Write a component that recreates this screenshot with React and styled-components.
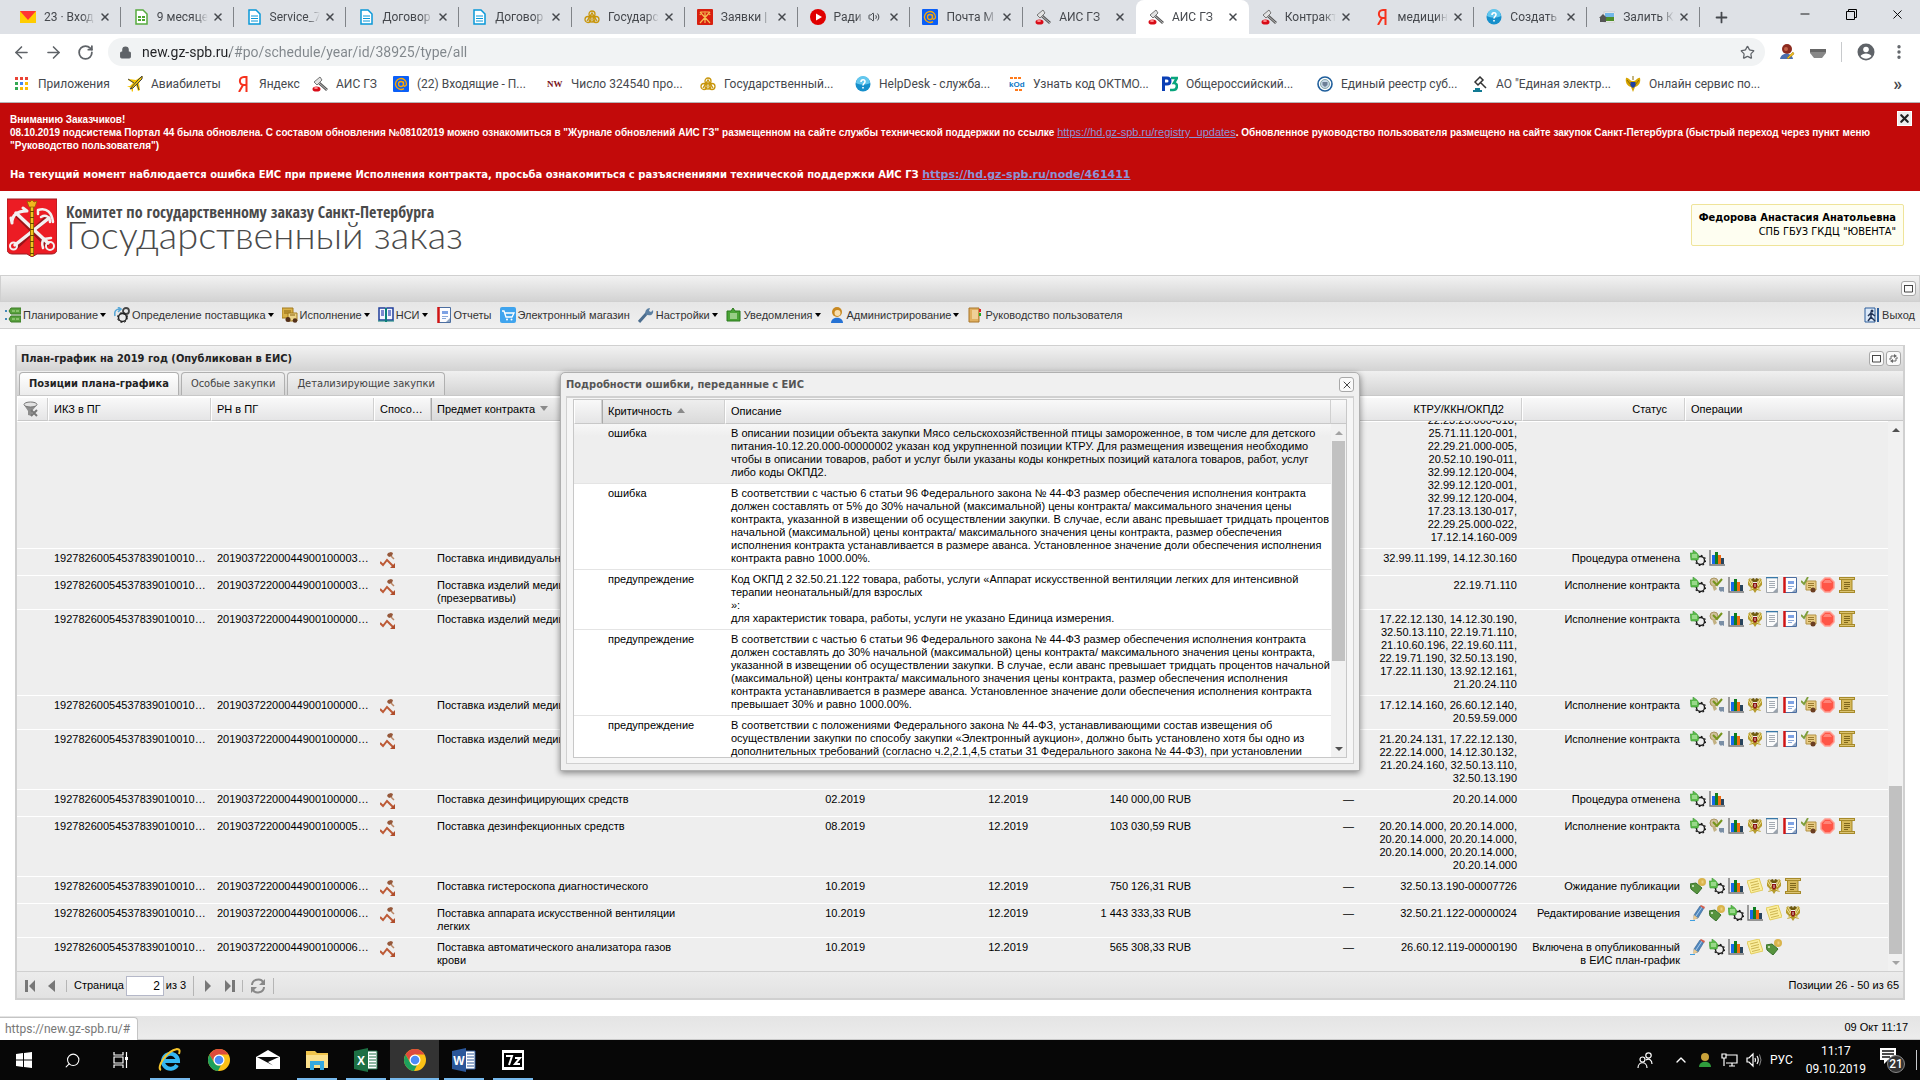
import styled, { createGlobalStyle, css } from "styled-components";
import {
  ArrowLeft,
  ArrowRight,
  RotateCw,
  Lock,
  Star,
  Volume2,
  Plus,
  X,
  Minus,
  EllipsisVertical,
  ChevronUp,
  Search,
} from "lucide-react";

const ui = `Roboto, "Open Sans", sans-serif`;
const arial = `"Liberation Sans", Arial, sans-serif`;
const tahoma = `"DejaVu Sans Condensed", "DejaVu Sans", sans-serif`;

const GlobalStyle = createGlobalStyle`
  * {
    box-sizing: border-box;
  }
  body {
    margin: 0;
    font-family: ${arial};
    font-size: 11px;
    line-height: 13px;
    color: #000;
  }
  button {
    margin: 0;
    padding: 0;
    border: 0;
    background: none;
    font: inherit;
    color: inherit;
    cursor: pointer;
  }
  svg {
    display: block;
    flex: none;
  }
`;

/* ---------- icons ---------- */

const Svg = ({ w = 16, h = 16, box, children }) => (
  <svg width={w} height={h} viewBox={box || `0 0 ${w} ${h}`} fill="none">
    {children}
  </svg>
);

const MailIcon = () => (
  <Svg>
    <rect y="2" width="16" height="12" fill="#fc0" />
    <path d="M0 2h16L8 11z" fill="#f33" />
  </Svg>
);
const SheetIcon = () => (
  <Svg>
    <path d="M3 1h7l4 4v10H3z" fill="#fff" stroke="#57ab3f" strokeWidth="1.5" />
    <path d="M5 7h3v2H5zM9 7h3v2H9zM5 10h3v2H5zM9 10h3v2H9z" fill="#4da62f" />
  </Svg>
);
const DocIcon = () => (
  <Svg>
    <path d="M3 1h7l4 4v10H3z" fill="#fff" stroke="#0a98d8" strokeWidth="1.5" />
    <path d="M5 7h7M5 9.500h7M5 12h7" stroke="#0a98d8" />
  </Svg>
);
const RingsIcon = () => (
  <Svg>
    <g stroke="#c8960c" strokeWidth="1.300">
      <circle cx="8" cy="5" r="3" />
      <circle cx="4" cy="10.500" r="3" />
      <circle cx="12" cy="10.500" r="3" />
      <circle cx="8" cy="10" r="3" />
      <path d="M3 12l5-8 5 8" />
    </g>
  </Svg>
);
const ArmsSmall = () => (
  <Svg>
    <rect width="16" height="16" rx="1" fill="#d8200f" />
    <path d="M3 3l10 11M13 3L3 14M8 2v12M3 6l1-3 3 0M13 6l-1-3-3 0" stroke="#f6c052" strokeWidth="1.200" />
  </Svg>
);
const PlayIcon = () => (
  <Svg>
    <circle cx="8" cy="8" r="8" fill="#e00000" />
    <path d="M6 4.500v7L12 8z" fill="#fff" />
  </Svg>
);
const AtIcon = () => (
  <Svg>
    <rect width="16" height="16" rx="1" fill="#0b5ff7" />
    <g stroke="#ffa800" strokeWidth="1.300">
      <circle cx="8" cy="8" r="2.500" />
      <path d="M10.500 5.500V9c0 2 3 1.500 3-1a5.500 5.500 0 1 0-2.500 4.600" />
    </g>
  </Svg>
);
const GavelFav = () => (
  <Svg>
    <path d="M6 6l9 8" stroke="#555" strokeWidth="2.800" />
    <path d="M7 7l8 7" stroke="#bbb" />
    <path d="M2 6l6-5 2 3-5 5z" fill="#e2e2e2" stroke="#777" />
    <ellipse cx="4.500" cy="13" rx="4" ry="2.600" fill="#d80c18" />
    <ellipse cx="4" cy="12" rx="2" ry="1" fill="#ff8c8c" />
  </Svg>
);
const YandexIcon = () => (
  <Svg>
    <path d="M11.500 0v16M11.500 1H9C3.500 1 3.500 9 9 9h2.500M8 9l-4 7" stroke="#f6311c" strokeWidth="2" />
  </Svg>
);
const HelpIcon = () => (
  <Svg>
    <circle cx="8" cy="8" r="7.500" fill="#168fcb" />
    <path d="M1 7a7 7 0 0 1 14 0c-4 2-10 2-14 0z" fill="#63c7ee" />
    <path d="M6 6c0-3 4-3 4-.5C10 7.500 8 7.500 8 9.500M8 11v1.500" stroke="#fff" strokeWidth="1.600" />
  </Svg>
);
const PhotoHouse = () => (
  <Svg>
    <rect x="5" y="3" width="11" height="10" fill="#fff" stroke="#ccc" />
    <rect x="6" y="4" width="9" height="4" fill="#72b7e8" />
    <rect x="6" y="8" width="9" height="4" fill="#4f8f2a" />
    <path d="M0 9l4-4 4 4H7v4H1V9z" fill="#555" />
  </Svg>
);
const AppsIcon = () => (
  <Svg>
    {["#ea4335", "#ea4335", "#ea4335", "#34a853", "#4285f4", "#fbbc05", "#34a853", "#fbbc05", "#fbbc05"].map((c, i) => (
      <rect key={i} x={1 + (i % 3) * 5} y={1 + Math.floor(i / 3) * 5} width="3" height="3" fill={c} />
    ))}
  </Svg>
);
const PlaneIcon = () => (
  <Svg>
    <path d="M15 0L9 4 2 3 1 4l5 3-3 3H0l4 2 1 4 1-1v-3l3-3 2 6 2-1-1-7 4-6z" fill="#f5c400" />
    <path d="M15 0l-5 5-7 8 3-1 9-9zM1 3l6 4M12 14l-2-6" stroke="#444" />
  </Svg>
);
const NwIcon = () => (
  <Svg>
    <text x="0" y="11" fontFamily="Liberation Serif" fontSize="9" fontWeight="bold" fill="#7a1420">
      NW
    </text>
  </Svg>
);
const KodIcon = () => (
  <Svg>
    <path d="M1 1h3v2H1zM5 1h3v2H5zM9 1h3v2H9zM6 13h3v2H6zM10 13h3v2h-3z" fill="#ff7a1a" />
    <text x="0" y="11" fontFamily="Liberation Sans" fontSize="8" fontWeight="bold" fill="#0a78c8">
      kOd
    </text>
  </Svg>
);
const P3Icon = () => (
  <Svg>
    <path d="M1.500 15V2H5c4 0 4 6 0 6H2" stroke="#0a3fb5" strokeWidth="3" />
    <path d="M9 2h6l-3 5c4 0 4 7-1 7H8" stroke="#09a57c" strokeWidth="2.600" />
  </Svg>
);
const SealIcon = () => (
  <Svg>
    <circle cx="8" cy="8" r="7" fill="#fff" stroke="#1f5e9b" strokeWidth="1.600" />
    <circle cx="8" cy="8" r="4.500" fill="#c7d7e6" stroke="#8aa" />
    <path d="M5.500 6h5v3L8 11 5.500 9z" fill="#6c7f95" />
  </Svg>
);
const GavelLine = () => (
  <Svg>
    <path d="M3 6l5-5 3 3-5 5zM8 6l6 6" stroke="#333" strokeWidth="1.500" />
    <path d="M3 13h5M1 15h9" stroke="#127a93" strokeWidth="1.800" />
  </Svg>
);
const Eagle = () => (
  <Svg>
    <path d="M6 7L5 3 3 1 1 3l0 5 3 3-2 3 4-1 2 3 2-3 4 1-2-3 3-3V3l-2-2-2 2-1 4z" fill="#b59a2c" />
    <path d="M1 3l4 6M3 2l3 6M15 3l-4 6M13 2l-3 6M3 13l3-2M13 13l-3-2" stroke="#efe39a" />
    <path d="M4 2l3-1 1 2 1-2 3 1-2 3H6z" fill="#6f5a10" />
    <path d="M6 6h4v4l-2 2-2-2z" fill="#8c1216" />
    <path d="M8 7v3" stroke="#e8dcd0" />
  </Svg>
);
const EagleBlue = () => (
  <Svg>
    <path d="M7 5C5 5 3 1 1 2c-1 4 1 8 5 9l2 5 2-5c4-1 6-5 5-9-2-1-4 3-6 3z" fill="#d6a400" />
    <path d="M2 4l4 5M14 4l-4 5M8 0v4" stroke="#8b6a00" />
    <path d="M5.500 6h5v4L8 12 5.500 10z" fill="#1d3fa4" />
  </Svg>
);
const PersonExt = () => (
  <Svg>
    <circle cx="8" cy="5" r="5" fill="#8d2b1f" />
    <circle cx="7" cy="5" r="2" fill="#c5634a" />
    <path d="M1 15c1-7 12-7 13 0z" fill="#4a6fb0" />
    <path d="M8 14l6-6 1 2-6 5z" fill="#f0c020" stroke="#a07000" strokeWidth=".5" />
  </Svg>
);
const ShieldExt = () => (
  <Svg>
    <path d="M0 5h16v4l-4 5H4L0 9z" fill="#888" />
    <path d="M0 5h16v3H0z" fill="#666" />
  </Svg>
);
const AccountIcon = () => (
  <Svg w={18} h={18}>
    <circle cx="9" cy="9" r="8.500" fill="#5f6368" />
    <circle cx="9" cy="6.500" r="2.800" fill="#fff" />
    <path d="M3.500 13c2-3.500 9-3.500 11 0-3 3.500-8 3.500-11 0z" fill="#fff" />
  </Svg>
);

const CityArms = () => (
  <Svg w={50} h={59}>
    <path d="M0 1h50v50c0 4-3 5-6 5H30l-5 3-5-3H6c-3 0-6-1-6-5z" fill="#ec1c24" stroke="#9c1a20" />
    <g stroke="#4a0a0c" strokeWidth="5" opacity=".5">
      <path d="M9 16l32 32M42 18L9 49" />
    </g>
    <g stroke="#f3f1f1" strokeLinecap="round">
      <path d="M9 15l32 30M42 20L8 47" strokeWidth="3.500" />
      <path d="M5 25c0-7 4-12 15-12M5 25l-1-5M20 13l-4-3" strokeWidth="3" />
      <path d="M31 12c9-3 14 3 15 12M34 19c5-3 9 0 9 5M31 12l0 4" strokeWidth="2.500" />
      <path d="M37 41c-3 3-2 6-1 9M37 41l7-1" strokeWidth="2.500" />
    </g>
    <circle cx="6.500" cy="48" r="3.500" stroke="#f3f1f1" strokeWidth="2" />
    <circle cx="43" cy="48" r="4" stroke="#f3f1f1" strokeWidth="2" />
    <path d="M25 8v50" stroke="#6a4a00" strokeWidth="4" />
    <path d="M25 8v50" stroke="#f2c41e" strokeWidth="2.600" strokeDasharray="5 1" />
    <path d="M20 3l3 1 2-2 2 2 3-1-2 6h-6z" fill="#f2b71e" stroke="#8c5d00" strokeWidth=".7" />
  </Svg>
);

const PlanIcon = () => (
  <Svg>
    <path d="M0 4h2M0 12h2" stroke="#4488b8" strokeWidth="2" />
    <path d="M6 1h10v6H6L4 4zM6 9h10v6H6l-2-3z" fill="#57a03c" stroke="#3e7d28" />
    <path d="M7 4h8M7 12h8" stroke="#b9e29a" strokeDasharray="3 1" />
  </Svg>
);
const Gears = () => (
  <Svg>
    <circle cx="12" cy="4" r="3" stroke="#444" strokeWidth="1.800" />
    <circle cx="8.500" cy="10.500" r="4" stroke="#222" strokeWidth="1.500" />
    <circle cx="8.500" cy="10.500" r="5" stroke="#222" strokeDasharray="2 2" />
    <path d="M1 9C0 4 2 2 6 2M4 0l3 2-3 3" stroke="#59a7d6" strokeWidth="1.600" />
  </Svg>
);
const ExecIcon = () => (
  <Svg>
    <path d="M0 1h11v10H0z" fill="#d9b148" stroke="#a37a1c" />
    <path d="M2 4h7M2 6h7" stroke="#8b6511" />
    <path d="M6 6h9v8H6z" fill="#ecd489" stroke="#a37a1c" />
    <path d="M8 8h5" stroke="#8b6511" />
    <circle cx="6" cy="12.500" r="2.500" fill="#53301a" />
    <circle cx="13" cy="13.500" r="2.300" fill="#53301a" />
  </Svg>
);
const BookIcon = () => (
  <Svg>
    <path d="M1 1h6l1 1 1-1h6v12H9l-1 1-1-1H1z" fill="#f4f6ff" stroke="#1f3e9a" strokeWidth="1.500" />
    <path d="M8 1v14" stroke="#0a8078" strokeWidth="2" />
    <path d="M3 4h3M3 6h3M3 8h3M10 4h3M10 6h3M10 8h3" stroke="#5364c0" strokeWidth="1.500" />
    <path d="M0 14h16" stroke="#0a8078" />
  </Svg>
);
const ReportIcon = () => (
  <Svg>
    <path d="M2.500 .5h12v15h-12z" fill="#fdfdff" stroke="#4c6ea0" />
    <path d="M1 1h3M1 3h3M1 5h3M1 7h3M1 9h3M1 11h3M1 13h3M1 15h3" stroke="#d01414" />
    <path d="M2.500 0v16" stroke="#d01414" strokeWidth="2" />
    <path d="M6 4h6v3H6z" fill="#7ea2e4" />
    <path d="M6 9.500h6M6 11.500h4" stroke="#8aa8d8" />
    <path d="M10 15l4-4v4z" fill="#8ea4c2" />
  </Svg>
);
const CartIcon = () => (
  <Svg>
    <rect width="16" height="16" rx="2" fill="#3fa4ee" />
    <path d="M2 4h2l2 6h6l2-4H5" stroke="#fff" strokeWidth="1.300" />
    <circle cx="7" cy="12.500" r="1" fill="#fff" />
    <circle cx="11.500" cy="12.500" r="1" fill="#fff" />
  </Svg>
);
const WrenchIcon = () => (
  <Svg>
    <path d="M1 15l8-9" stroke="#4c6e8f" strokeWidth="3" />
    <path d="M8 8C6 4 9 1 12 1l-1 3 2 1 2-2c1 4-2 6-5 5z" fill="#5c80a2" />
  </Svg>
);
const NoticeIcon = () => (
  <Svg>
    <path d="M1 4h4l2-3 2 3h5v10H1z" fill="#4aa336" stroke="#2b7a1c" />
    <path d="M4 7h7M4 9h7M4 11h7" stroke="#e6f8d8" />
  </Svg>
);
const AdminIcon = () => (
  <Svg>
    <circle cx="8" cy="5" r="5" fill="#c88820" />
    <circle cx="8.500" cy="6" r="3" fill="#f8dfb0" />
    <path d="M2 16c0-7 12-7 12 0z" fill="#2672d4" />
  </Svg>
);
const GuideIcon = () => (
  <Svg>
    <path d="M2 1h10v14H2z" fill="#e0b060" stroke="#a87428" />
    <path d="M5 3h6v9H5z" fill="#efcf96" />
    <path d="M13 2v3" stroke="#d22" strokeWidth="2" />
    <path d="M13 6v3" stroke="#2a2" strokeWidth="2" />
  </Svg>
);
const ExitIcon = () => (
  <Svg>
    <path d="M1 1h10v14H1z" fill="#dce9f8" stroke="#2a5c9a" />
    <path d="M14 1v14" stroke="#2a5c9a" strokeWidth="2" />
    <circle cx="8" cy="4" r="1.500" fill="#235" />
    <path d="M4 14l3-4V6l4 3M7 10l4 4M7 6L4 9" stroke="#235" strokeWidth="1.500" />
  </Svg>
);
const FunnelIcon = () => (
  <Svg>
    <path d="M1 4l4 6v4l4 1v-5l5-6z" fill="#8d8d8d" />
    <ellipse cx="7.500" cy="3.500" rx="6.500" ry="2.500" fill="#e2e2e2" stroke="#777" />
    <path d="M8 9l6 6M14 9l-6 6" stroke="#777" strokeWidth="2" />
  </Svg>
);
const AuctionIcon = () => (
  <Svg>
    <path d="M8 1l3-1 2 1-1 3-3 1-2-2z" fill="#96583a" />
    <path d="M11 4l3 3" stroke="#b98565" strokeWidth="1.500" />
    <path d="M0 10l3 3 4-5 6 6" stroke="#bd5a36" strokeWidth="2" />
    <path d="M15 11v5h-5z" fill="#b04e2c" />
  </Svg>
);

const GearNote = () => (
  <Svg>
    <circle cx="10.500" cy="10.500" r="4" stroke="#1c1c1c" strokeWidth="1.400" />
    <circle cx="10.500" cy="10.500" r="5" stroke="#1c1c1c" strokeDasharray="1.600 2.300" strokeWidth="1.400" />
    <path d="M3 3V0l4 3 2 3-1 4H1L0 3z" fill="#5cbb4c" stroke="#3f9a35" strokeWidth=".6" />
    <path d="M2 5h5M2 7h5" stroke="#d6f5c8" />
  </Svg>
);
const CheckKey = () => (
  <Svg>
    <circle cx="5" cy="5" r="4" fill="#cfc09a" stroke="#aa9560" />
    <path d="M3 8l2 6 3-2-2-4z" fill="#c3b283" />
    <path d="M4 4l4 4 5-6" stroke="#76951c" strokeWidth="2" />
    <path d="M10 10h5v5l-2-1-1 1-2-2z" fill="#7a8fa6" />
  </Svg>
);
const ChartIcon = () => (
  <Svg>
    <path d="M1 0v15h15" stroke="#777" strokeWidth="1.400" />
    <path d="M3 5h3v9H3z" fill="#1768e8" />
    <path d="M6 2h3v12H6z" fill="#0f7d1f" />
    <path d="M9 5h3v9H9z" fill="#f26a10" />
    <path d="M12 8h3v6h-3z" fill="#27435c" />
  </Svg>
);
const PaperIcon = () => (
  <Svg w={13} box="0 0 13 16">
    <path d="M.5 .5h11v15H.5z" fill="#fbfbfb" stroke="#a0a6ad" />
    <path d="M0 .5h12" stroke="#3878a8" strokeWidth="1.600" />
    <path d="M3 4.500h6M3 6.500h6M3 8.500h6M3 10.500h6" stroke="#a4abb3" />
    <path d="M7 15l4-4v4z" fill="#98a2ad" />
  </Svg>
);
const SignIcon = () => (
  <Svg>
    <path d="M5 4h10v9H5z" fill="#e8cc84" stroke="#b39142" />
    <path d="M7 6.500h6M7 8.500h6M7 10.500h3" stroke="#9a7a30" />
    <path d="M0 4l3 3 4-7" stroke="#7e9e3c" strokeWidth="1.800" />
    <circle cx="12" cy="13" r="2.500" fill="#6b3e22" />
  </Svg>
);
const StopIcon = () => (
  <Svg>
    <path d="M5 1h5l4 4v6l-4 4H5l-4-4V5z" fill="#ff5547" stroke="#ff9d92" strokeWidth="1.500" />
    <path d="M5 3h5l2 3H3z" fill="#ff8478" />
  </Svg>
);
const ScrollIcon = () => (
  <Svg>
    <path d="M2 2h11v12H3z" fill="#d5b859" />
    <path d="M2.500 2v12M13 2v12" stroke="#a68a2a" />
    <path d="M0 0h16v3H0zM0 13h16v3H0z" fill="#a68a2a" />
    <path d="M1 1.500h14M1 14.500h14" stroke="#dcc474" />
    <path d="M5 5.500h6M5 7.500h6M5 9.500h6M5 11.500h4" stroke="#7f671c" />
  </Svg>
);
const TagIcon = () => (
  <Svg>
    <circle cx="12" cy="4" r="4" fill="#d9b44c" />
    <path d="M12.500 2.500v3" stroke="#ecd07c" strokeWidth="2" />
    <path d="M0 6l6-1 6 5-5 6-6-5z" fill="#57943e" stroke="#37702a" />
    <circle cx="3" cy="8" r="1" fill="#dff0d4" />
  </Svg>
);
const NoteIcon = () => (
  <Svg>
    <path d="M0 3l12-3 4 12-12 3z" fill="#fbee9c" stroke="#e2cd5e" />
    <path d="M3 5l8-2M4 7.500l8-2M4 10l8-2M5 12.500l8-2" stroke="#cdb552" />
  </Svg>
);
const PencilIcon = () => (
  <Svg>
    <path d="M4 10l6-9 4 2-6 10-4 1z" fill="#4f86bd" stroke="#35618d" strokeWidth=".6" />
    <path d="M6 11l6-9" stroke="#a9cdee" />
    <path d="M10 1l1-1 4 2-1 2z" fill="#d4604f" />
    <path d="M4 10l4 3-5 2z" fill="#ecc98c" />
    <path d="M0 15.500h5" stroke="#3f9fe0" />
  </Svg>
);

const opIcons = {
  gear: GearNote,
  check: CheckKey,
  chart: ChartIcon,
  eagle: Eagle,
  paper: PaperIcon,
  report: ReportIcon,
  sign: SignIcon,
  stop: StopIcon,
  scroll: ScrollIcon,
  tag: TagIcon,
  note: NoteIcon,
  pencil: PencilIcon,
};

/* taskbar */
const WinIcon = () => (
  <Svg>
    <path d="M0 2l7-1v6.500H0zM8 1l8-1v7.500H8zM0 8.500h7V15l-7-1zM8 8.500h8V16l-8-1z" fill="#fff" />
  </Svg>
);
const TaskView = () => (
  <Svg>
    <path d="M1 0v3h9V0M1 16v-3h9v3M1 5h9v6H1zM13.500 0v16" stroke="#fff" strokeWidth="1.200" />
    <rect x="12" y="5" width="3" height="3" fill="#fff" />
  </Svg>
);
const IeIcon = () => (
  <Svg w={24} h={24}>
    <path d="M19 17a7.500 7.500 0 1 1 1-4H6" stroke="#35b7f1" strokeWidth="4" />
    <path d="M3 22C-2 20 8 3 19 1c3 0 3 2 2 5" stroke="#f5c52c" strokeWidth="2" />
  </Svg>
);
const ChromeIcon = () => (
  <Svg w={24} h={24}>
    <circle cx="12" cy="12" r="11" fill="#fbc116" />
    <path d="M2.500 6.500A11 11 0 0 1 21.500 6.500H12A5.500 5.500 0 0 0 7 14z" fill="#de4b3c" />
    <path d="M2.500 6.500L7.200 14.700A5.500 5.500 0 0 0 14 17l-3 6A11 11 0 0 1 2.500 6.500z" fill="#1da05d" />
    <circle cx="12" cy="12" r="5.500" fill="#fff" />
    <circle cx="12" cy="12" r="4.300" fill="#4c8bf5" />
  </Svg>
);
const MailApp = () => (
  <Svg w={24} h={24}>
    <path d="M0 9l12-7 12 7v12H0z" fill="#fff" />
    <path d="M1 9h22l-11 5 5 3.500L1 9z" fill="#0a0a0a" />
  </Svg>
);
const FolderApp = () => (
  <Svg w={24} h={24}>
    <path d="M1 3h9l2 2h11v15H1z" fill="#f0c44c" />
    <path d="M1 7h22v13H1z" fill="#fbe08c" />
    <path d="M5 22v-9h14v9h-4v-5h-6v5z" fill="#35a9e0" />
  </Svg>
);
const OfficeApp = ({ color, letter }) => (
  <Svg w={24} h={24}>
    <path d="M13 3h10v18H13z" fill="#fff" stroke={color} />
    <path d="M15 6h7M15 9h7M15 12h7M15 15h7M15 18h7" stroke={color} />
    <path d="M0 3l14-3v24L0 21z" fill={color} />
    <text x="7" y="17" textAnchor="middle" fontFamily="Liberation Sans" fontSize="12" fontWeight="bold" fill="#fff">
      {letter}
    </text>
  </Svg>
);
const ZipApp = () => (
  <Svg w={24} h={24}>
    <rect x="1" y="2" width="22" height="20" fill="#fff" />
    <rect x="3" y="5" width="18" height="14" fill="#000" />
    <path d="M5 8h6l-3 9M14 10h5l-5 6h5" stroke="#fff" strokeWidth="2" />
  </Svg>
);
const PeopleTray = () => (
  <Svg>
    <g stroke="#fff" strokeWidth="1.200">
      <circle cx="5.500" cy="7.500" r="2.500" />
      <path d="M1 16c0-7 9-7 9 0" />
      <circle cx="11.500" cy="3.500" r="2.700" />
      <path d="M9 8c3-2 6 0 6 4" />
    </g>
  </Svg>
);
const UserTray = () => (
  <Svg>
    <circle cx="8" cy="5" r="4" fill="#c9a23a" />
    <path d="M2 15c0-7 12-7 12 0z" fill="#2f9c3c" />
  </Svg>
);
const NetTray = () => (
  <Svg w={17} h={16}>
    <path d="M5 3h11v8H5M8 14h6M11 11v3M1 2h4v4H1zM3 6v8" stroke="#fff" strokeWidth="1.200" />
  </Svg>
);
const VolTray = () => (
  <Svg>
    <path d="M1 6h2l4-4v12l-4-4H1zM9 6q1 2 0 4M11 4q2.500 4 0 8" stroke="#fff" strokeWidth="1.200" />
    <path d="M13.500 2.500q3 5.500 0 11" stroke="#888" />
  </Svg>
);
const ActionCenter = () => (
  <Svg w={28} h={28}>
    <path d="M2 2h16v12H10l-4 4v-4H2z" fill="#fff" />
    <path d="M4 5h12M4 8h12M4 11h8" stroke="#111" strokeWidth="1.300" />
    <circle cx="18" cy="18" r="8.500" fill="#333" stroke="#888" />
    <text x="18" y="22" textAnchor="middle" fontFamily="Roboto" fontSize="12" fontWeight="500" fill="#fff">
      21
    </text>
  </Svg>
);

/* ---------- browser chrome ---------- */

const Screen = styled.div`
  display: flex;
  flex-direction: column;
  height: 100vh;
  min-height: 800px;
  min-width: 1500px;
  background: #fff;
`;

const TabStrip = styled.div`
  display: flex;
  height: 34px;
  padding-left: 8px;
  background: #dee1e6;
  font: 12px/16px ${ui};
  color: #45484d;
`;

const TabList = styled.div`
  display: flex;
  flex: 1;
  min-width: 0;
`;

const BrowserTab = styled.div`
  flex: 1 1 0;
  min-width: 0;
  display: flex;
  align-items: center;
  gap: 8px;
  padding: 0 10px 0 12px;
  background: linear-gradient(#808388, #808388) right 7px / 1px 20px no-repeat;
  ${(props) => props.$plain && "background: none;"}
  ${(props) =>
    props.$active &&
    css`
      background: #fff;
      border-radius: 8px 8px 0 0;
    `}
`;

const TabName = styled.span`
  flex: 1;
  min-width: 0;
  margin-right: -4px;
  overflow: hidden;
  white-space: nowrap;
  mask-image: linear-gradient(90deg, #000 75%, transparent);
`;

const NewTab = styled.button`
  display: grid;
  place-items: center;
  width: 42px;
  margin-right: 40px;
`;

const WindowButton = styled.button`
  display: grid;
  place-items: center;
  width: 46px;
  height: 28px;
  color: #000;
`;

const AddressRow = styled.div`
  display: flex;
  align-items: center;
  height: 36px;
  padding: 0 12px 0 5px;
  color: #5f6368;
`;

const NavButton = styled.button`
  display: grid;
  place-items: center;
  width: 32px;
`;

const Omnibox = styled.label`
  flex: 1;
  display: flex;
  align-items: center;
  gap: 10px;
  height: 28px;
  margin-left: 7px;
  padding: 0 10px 0 11px;
  border-radius: 14px;
  background: #f1f3f4;
`;

const UrlInput = styled.input`
  flex: 1;
  border: 0;
  padding: 0;
  outline: 0;
  font: 14px/20px ${ui};
  color: transparent;
  background: linear-gradient(90deg, #202124 88px, #80868b 88px);
  background-clip: text;
`;

const Extensions = styled.div`
  display: flex;
  align-items: center;
  gap: 15px;
  padding-left: 14px;
`;

const Divider = styled.span`
  width: 1px;
  height: 20px;
  background: #c8cacd;
`;

const Bookmarks = styled.nav`
  display: flex;
  align-items: center;
  height: 33px;
  padding: 0 18px 4px 14px;
  border-bottom: 1px solid #b6b4b6;
  font: 12px/16px ${ui};
  color: #45484d;
`;

const Bookmark = styled.a`
  display: flex;
  align-items: center;
  gap: 8px;
  width: ${(props) => props.$w}px;
  flex: none;
  overflow: hidden;
  white-space: nowrap;
  color: inherit;
  text-decoration: none;
`;

const More = styled.button`
  margin-left: auto;
  font-size: 18px;
  font-weight: 600;
`;

/* ---------- page ---------- */

const Page = styled.main`
  position: relative;
  flex: 1;
  min-height: 0;
  display: flex;
  flex-direction: column;
`;

const Banner = styled.section`
  display: flex;
  justify-content: space-between;
  height: 88px;
  padding: 8px 8px 0 10px;
  background: #c20a0a;
  color: #fff;
  font-weight: bold;
`;

const BannerText = styled.div`
  padding-top: 2px;
  font-size: 10px;

  p {
    margin: 0;
  }
  p + p {
    margin-top: 16px;
    font-family: "DejaVu Sans", sans-serif;
  }
  a {
    color: #8c93d6;
    font-size: 11px;
  }
  p:first-child a {
    font-weight: normal;
  }
`;

const BannerClose = styled.button`
  flex: none;
  display: grid;
  place-items: center;
  width: 15px;
  height: 15px;
  border: 1px solid #fff;
  background: #eee;
  color: #222;
`;

const SiteHeader = styled.header`
  display: flex;
  justify-content: space-between;
  height: 84px;
  padding: 7px 16px 0 7px;
`;

const Brand = styled.div`
  display: flex;
  gap: 9px;
  color: #4a4a4a;
`;

const BrandText = styled.div`
  padding-top: 4px;
`;

const Committee = styled.div`
  font: 16px/20px "Liberation Sans Narrow", "Open Sans Condensed", sans-serif;
  white-space: nowrap;
`;

const SiteName = styled.div`
  font: 300 38px/24px "Lato", "Open Sans", sans-serif;
  white-space: nowrap;
`;

const UserBox = styled.div`
  height: 42px;
  margin-top: 6px;
  padding: 6px 7px;
  border: 1px solid #efe49a;
  border-radius: 2px;
  background: #fefef1;
  font: 11px/14px ${tahoma};
  text-align: right;
`;

const bar = css`
  background: linear-gradient(#f2f2f2, #d3d3d3);
`;

const GreyBar = styled.div`
  display: flex;
  align-items: center;
  justify-content: flex-end;
  height: 27px;
  padding: 0 3px;
  border: 1px solid #d0d0d0;
  ${bar}
`;

const ToolButton = styled.button`
  display: grid;
  place-items: center;
  width: 15px;
  height: 15px;
  border: 1px solid #a8a8a8;
  border-radius: 3px;
  background: #fafafa;
  color: #444;
`;

const MenuBar = styled.nav`
  display: flex;
  align-items: center;
  gap: 8px;
  height: 27px;
  padding: 0 5px;
  border-bottom: 1px solid #d0d0d0;
  background: linear-gradient(#e6e6e6, #f0f0f0);
`;

const MenuButton = styled.button`
  display: flex;
  align-items: center;
  gap: 2px;
  white-space: nowrap;
  color: #333;

  &:last-child {
    margin-left: auto;
  }
`;

const Caret = styled.span`
  border: 3px solid transparent;
  border-top: 4px solid #000;
  border-bottom: 0;
`;

const Panel = styled.section`
  flex: 1;
  min-height: 0;
  display: flex;
  flex-direction: column;
  margin: 16px 15px;
  border: 2px solid #d0d0d0;
  border-top-width: 1px;
`;

const PanelTitle = styled.div`
  display: flex;
  align-items: center;
  gap: 2px;
  height: 25px;
  padding: 0 2px 0 4px;
  ${bar}

  h1 {
    flex: 1;
    margin: 0;
    font: bold 11px/16px ${tahoma};
    color: #222;
  }
`;

const PanelTabs = styled.div`
  display: flex;
  gap: 2px;
  height: 25px;
  padding: 1px 2px 0;
  border-bottom: 1px solid #c8c8c8;
  background: linear-gradient(#f0f0f0, #d3d3d3);
`;

const PanelTab = styled.button`
  padding: 0 9px;
  border: 1px solid #b0b0b0;
  border-bottom: 0;
  border-radius: 4px 4px 0 0;
  background: linear-gradient(#f0f0f0, #dcdcdc);
  font: 11px/20px ${tahoma};
  color: #444;
  ${(props) =>
    props.$active &&
    css`
      background: linear-gradient(#fff, #ececec);
      font-weight: bold;
      color: #222;
    `}
`;

const GridArea = styled.div`
  flex: 1;
  min-height: 0;
  display: flex;
  margin-top: 2px;
  background: #eee;
  border-bottom: 1px solid #d0d0d0;
`;

const Grid = styled.table`
  flex: 1;
  width: 0;
  table-layout: fixed;
  border-spacing: 0;
  align-self: flex-start;
`;

const Th = styled.th`
  height: ${(props) => props.$h || 23}px;
  padding: 0 6px 0 5px;
  border-left: 1px solid #fff;
  border-right: 1px solid #d0d0d0;
  border-bottom: 1px solid #c8c8c8;
  background: linear-gradient(#f9f9f9, #e5e5e6);
  font-weight: normal;
  text-align: ${(props) => (props.$right ? "right" : "left")};
  white-space: nowrap;
  overflow: hidden;
  text-overflow: ellipsis;
  ${(props) => props.$right && "padding-right: 17px;"}
  ${(props) =>
    props.$sorted &&
    css`
      border-left-color: #aaa;
      background: linear-gradient(#eee, #dadada);
    `}
  ${(props) => props.$last && "border-right: 0;"}
`;

const SortMark = styled.span`
  display: inline-block;
  margin: 0 0 2px 5px;
  border: 4px solid transparent;
  border-${(props) => (props.$up ? "bottom" : "top")}: 5px solid #8a8a8a;
  border-${(props) => (props.$up ? "top" : "bottom")}: 0;
`;

const Row = styled.tr`
  height: 27px;
`;

const Td = styled.td`
  padding: ${(props) => (props.$ops ? "1px 5px" : "3px 5px 4px 6px")};
  border-top: 1px solid #fff;
  vertical-align: top;
  text-align: ${(props) => (props.$right ? "right" : "left")};
  white-space: pre-line;
  ${(props) =>
    props.$clip &&
    css`
      overflow: hidden;
      white-space: nowrap;
      text-overflow: ellipsis;
    `}
`;

const ScrolledCell = styled.div`
  display: flex;
  flex-direction: column;
  justify-content: flex-end;
  height: 123px;
  margin-top: -4px;
  overflow: hidden;
  white-space: pre-line;
`;

const Ops = styled.div`
  display: flex;
  gap: 3px;
`;

const ScrollColumn = styled.div`
  display: flex;
  flex-direction: column;
  width: 15px;
  background: #f1f1f1;
`;

const ScrollHead = styled.div`
  height: ${(props) => props.$h || 23}px;
  border-bottom: 1px solid #c8c8c8;
  background: linear-gradient(#f9f9f9, #e5e5e6);
`;

const Thumb = styled.div`
  height: ${(props) => props.$h}px;
  margin: ${(props) => props.$push};
  background: #c1c1c1;
`;

const ArrowButton = styled.button`
  display: grid;
  place-items: center;
  height: 17px;

  &::after {
    content: "";
    border: 4px solid transparent;
    border-${(props) => (props.$up ? "bottom" : "top")}: 4px solid ${(props) => (props.$dim ? "#a3a3a3" : "#505050")};
    border-${(props) => (props.$up ? "top" : "bottom")}: 0;
  }
`;

const Pager = styled.div`
  display: flex;
  align-items: center;
  height: 26px;
  padding: 1px 4px 0 8px;
  background: linear-gradient(#ececec, #e2e2e2);
`;

const PagerGroup = styled.div`
  display: flex;
  align-items: center;
  gap: ${(props) => props.$gap}px;
  padding: 0 7px;
  border-right: 1px solid #b5b5b5;

  &:first-child {
    padding: 0 11px 0 0;
  }
`;

const PageInput = styled.input`
  width: 38px;
  height: 20px;
  margin: 0 2px;
  padding: 0 3px;
  border: 1px solid #b5b8c8;
  font: 12px/16px ${arial};
  text-align: right;
`;

const PageCount = styled.span`
  margin-left: auto;
`;

const StatusBar = styled.footer`
  display: flex;
  align-items: center;
  justify-content: flex-end;
  height: 24px;
  padding: 0 12px;
  border-bottom: 1px solid #c8c8c8;
  background: linear-gradient(#e4e4e4, #ececec);
`;

const LinkBubble = styled.div`
  position: absolute;
  left: 0;
  bottom: 0;
  padding: 3px 7px 3px 5px;
  border: 1px solid #c4c4c4;
  border-width: 1px 1px 0 0;
  border-radius: 0 4px 0 0;
  background: #fff;
  font: 12px/16px ${ui};
  color: #777;
`;

/* ---------- dialog ---------- */

const Overlay = styled.div`
  position: absolute;
  inset: 0;
  display: grid;
  place-items: center;
`;

const Dialog = styled.section`
  display: flex;
  flex-direction: column;
  width: 800px;
  height: 399px;
  padding: 0 5px 6px;
  border: 1px solid #b0b0b0;
  border-radius: 5px 5px 0 0;
  background: #f0f0f0;
  box-shadow: 0 2px 6px rgba(0, 0, 0, 0.45);
`;

const DialogTitle = styled.div`
  display: flex;
  align-items: center;
  justify-content: space-between;
  height: 23px;
  flex: none;

  h2 {
    margin: 0;
    font: bold 11px/16px ${tahoma};
    color: #555;
  }
`;

const DialogBody = styled.div`
  flex: 1;
  min-height: 0;
  display: flex;
  padding: 1px 6px 5px;
  border: 1px solid #d0d0d0;
  border-top-width: 2px;
  background: #f6f6f6;
`;

const DialogGrid = styled.div`
  flex: 1;
  display: flex;
  overflow: hidden;
  border: 1px solid #c8c8c8;
  background: #fff;

  table {
    width: 0;
    flex: 1;
    table-layout: fixed;
    border-spacing: 0;
    align-self: flex-start;
  }
`;

const ErrorRow = styled.tr`
  background: ${(props) => (props.$selected ? "linear-gradient(#f7f7f7, #eee 12px)" : "#fff")};
`;

const ErrorTd = styled.td`
  padding: 3px 0 4px 6px;
  border-bottom: 1px solid #e4e4e4;
  vertical-align: top;
  white-space: pre;
`;

/* ---------- taskbar ---------- */

const Taskbar = styled.footer`
  display: flex;
  height: 40px;
  flex: none;
  background: #070707;
  color: #fff;
  font: 12px/16px ${ui};
`;

const TaskButton = styled.button`
  display: grid;
  place-items: center;
  width: ${(props) => (props.$narrow ? 48 : 49)}px;
  padding-top: 2px;
  border-bottom: 2px solid transparent;
  ${(props) =>
    props.$open &&
    "background: linear-gradient(#76b9ed, #76b9ed) 5px 100% / 40px 2px no-repeat; background-origin: border-box;"}
  ${(props) => props.$active && "background: #333; border-bottom-color: #76b9ed;"}
`;

const Tray = styled.div`
  display: flex;
  align-items: center;
  gap: 8px;
  margin-left: auto;
  padding-right: 3px;

  > :first-child {
    margin-right: 12px;
  }
  > :last-child {
    margin-left: 2px;
  }
`;

const Clock = styled.time`
  margin: 0 4px 0 5px;
  text-align: center;
  line-height: 18px;
`;

/* ---------- data ---------- */

const tabs = [
  ["23 · Вход", MailIcon],
  ["9 месяце", SheetIcon],
  ["Service_7", DocIcon],
  ["Договор", DocIcon],
  ["Договор", DocIcon],
  ["Государс", RingsIcon],
  ["Заявки |", ArmsSmall],
  ["Ради", PlayIcon],
  ["Почта М", AtIcon],
  ["АИС ГЗ", GavelFav],
  ["АИС ГЗ", GavelFav],
  ["Контракт", GavelFav],
  ["медицин", YandexIcon],
  ["Создать", HelpIcon],
  ["Залить К", PhotoHouse],
];
const activeTab = 10;

const bookmarks = [
  ["Приложения", AppsIcon, 113],
  ["Авиабилеты", PlaneIcon, 108],
  ["Яндекс", YandexIcon, 77],
  ["АИС ГЗ", GavelFav, 81],
  ["(22) Входящие - П...", AtIcon, 154],
  ["Число 324540 про...", NwIcon, 153],
  ["Государственный...", RingsIcon, 155],
  ["HelpDesk - служба...", HelpIcon, 154],
  ["Узнать код ОКТМО...", KodIcon, 153],
  ["Общероссийский...", P3Icon, 155],
  ["Единый реестр суб...", SealIcon, 155],
  ['АО "Единая электр...', GavelLine, 153],
  ["Онлайн сервис по...", EagleBlue, 150],
];

const menu = [
  ["Планирование", PlanIcon, true],
  ["Определение поставщика", Gears, true],
  ["Исполнение", ExecIcon, true],
  ["НСИ", BookIcon, true],
  ["Отчеты", ReportIcon],
  ["Электронный магазин", CartIcon],
  ["Настройки", WrenchIcon, true],
  ["Уведомления", NoticeIcon, true],
  ["Администрирование", AdminIcon, true],
  ["Руководство пользователя", GuideIcon],
  ["Выход", ExitIcon],
];

const columns = [31, 163, 163, 57, 276, 163, 163, 163, 163, 163, 163, null];

const running = ["gear", "check", "chart", "eagle", "paper", "report", "sign", "stop", "scroll"];
const ikz = "19278260054537839010010010000000244";
const rnPrefix = "2019037220004490010000";

const scrolledCodes =
  "22.23.23.000-018,\n25.71.11.120-001,\n22.29.21.000-005,\n20.52.10.190-011,\n32.99.12.120-004,\n32.99.12.120-001,\n32.99.12.120-004,\n17.23.13.130-017,\n22.29.25.000-022,\n17.12.14.160-009";

const rows = [
  { rn: "3", subject: "Поставка индивидуальных средств", codes: "32.99.11.199, 14.12.30.160", status: "Процедура отменена", ops: ["gear", "chart"] },
  { rn: "3", subject: "Поставка изделий медицинских\n(презервативы)", codes: "22.19.71.110", status: "Исполнение контракта", ops: running },
  {
    rn: "0",
    subject: "Поставка изделий медицинских",
    codes:
      "17.22.12.130, 14.12.30.190,\n32.50.13.110, 22.19.71.110,\n21.10.60.196, 22.19.60.111,\n22.19.71.190, 32.50.13.190,\n17.22.11.130, 13.92.12.161,\n21.20.24.110",
    status: "Исполнение контракта",
    ops: running,
  },
  { rn: "0", subject: "Поставка изделий медицинских", codes: "17.12.14.160, 26.60.12.140,\n20.59.59.000", status: "Исполнение контракта", ops: running },
  {
    rn: "0",
    subject: "Поставка изделий медицинских",
    codes: "21.20.24.131, 17.22.12.130,\n22.22.14.000, 14.12.30.132,\n21.20.24.160, 32.50.13.110,\n32.50.13.190",
    status: "Исполнение контракта",
    ops: running,
  },
  { rn: "0", subject: "Поставка дезинфицирующих средств", from: "02.2019", sum: "140 000,00 RUB", codes: "20.20.14.000", status: "Процедура отменена", ops: ["gear", "chart"] },
  {
    rn: "5",
    subject: "Поставка дезинфекционных средств",
    from: "08.2019",
    sum: "103 030,59 RUB",
    codes: "20.20.14.000, 20.20.14.000,\n20.20.14.000, 20.20.14.000,\n20.20.14.000, 20.20.14.000,\n20.20.14.000",
    status: "Исполнение контракта",
    ops: running,
  },
  { rn: "6", subject: "Поставка гистероскопа диагностического", from: "10.2019", sum: "750 126,31 RUB", codes: "32.50.13.190-00007726", status: "Ожидание публикации", ops: ["tag", "gear", "chart", "note", "eagle", "scroll"] },
  { rn: "6", subject: "Поставка аппарата искусственной вентиляции легких", from: "10.2019", sum: "1 443 333,33 RUB", codes: "32.50.21.122-00000024", status: "Редактирование извещения", ops: ["pencil", "tag", "gear", "chart", "note", "eagle"] },
  { rn: "6", subject: "Поставка автоматического анализатора газов крови", from: "10.2019", sum: "565 308,33 RUB", codes: "26.60.12.119-00000190", status: "Включена в опубликованный\nв ЕИС план-график", ops: ["pencil", "gear", "chart", "note", "tag"] },
];

const errors = [
  [
    "ошибка",
    "В описании позиции объекта закупки Мясо сельскохозяйственной птицы замороженное, в том числе для детского\nпитания-10.12.20.000-00000002 указан код укрупненной позиции КТРУ. Для размещения извещения необходимо\nчтобы в описании товаров, работ и услуг были указаны коды конкретных позиций каталога товаров, работ, услуг\nлибо коды ОКПД2.",
  ],
  [
    "ошибка",
    "В соответствии с частью 6 статьи 96 Федерального закона № 44-ФЗ размер обеспечения исполнения контракта\nдолжен составлять от 5% до 30% начальной (максимальной) цены контракта/ максимального значения цены\nконтракта, указанной в извещении об осуществлении закупки. В случае, если аванс превышает тридцать процентов\nначальной (максимальной) цены контракта/ максимального значения цены контракта, размер обеспечения\nисполнения контракта устанавливается в размере аванса. Установленное значение доли обеспечения исполнения\nконтракта равно 1000.00%.",
  ],
  [
    "предупреждение",
    "Код ОКПД 2 32.50.21.122 товара, работы, услуги «Аппарат искусственной вентиляции легких для интенсивной\nтерапии неонатальный/для взрослых\n»:\nдля характеристик товара, работы, услуги не указано Единица измерения.",
  ],
  [
    "предупреждение",
    "В соответствии с частью 6 статьи 96 Федерального закона № 44-ФЗ размер обеспечения исполнения контракта\nдолжен составлять до 30% начальной (максимальной) цены контракта/ максимального значения цены контракта,\nуказанной в извещении об осуществлении закупки. В случае, если аванс превышает тридцать процентов начальной\n(максимальной) цены контракта/ максимального значения цены контракта, размер обеспечения исполнения\nконтракта устанавливается в размере аванса. Установленное значение доли обеспечения исполнения контракта\nпревышает 30% и равно 1000.00%.",
  ],
  [
    "предупреждение",
    "В соответствии с положениями Федерального закона № 44-ФЗ, устанавливающими состав извещения об\nосуществлении закупки по способу закупки «Электронный аукцион», должно быть установлено хотя бы одно из\nдополнительных требований (согласно ч.2,2.1,4,5 статьи 31 Федерального закона № 44-ФЗ), при установлении",
  ],
];

/* ---------- components ---------- */

const Browser = () => (
  <>
    <TabStrip>
      <TabList>
        {tabs.map(([name, Icon], i) => (
          <BrowserTab key={i} $active={i === activeTab} $plain={i === activeTab - 1 || i === activeTab + 1}>
            <Icon />
            <TabName>{name}</TabName>
            {i === 7 && <Volume2 size={12} />}
            <X size={12} strokeWidth={3} />
          </BrowserTab>
        ))}
      </TabList>
      <NewTab aria-label="Новая вкладка">
        <Plus size={17} strokeWidth={2.5} />
      </NewTab>
      <WindowButton aria-label="Свернуть">
        <Minus size={14} strokeWidth={1.5} />
      </WindowButton>
      <WindowButton aria-label="Восстановить">
        <Svg w={11} h={11}>
          <path d="M.5 2.500h8v8h-8zM2.500 2.500v-2h8v8h-2" stroke="#000" />
        </Svg>
      </WindowButton>
      <WindowButton aria-label="Закрыть">
        <X size={15} strokeWidth={1.5} />
      </WindowButton>
    </TabStrip>
    <AddressRow>
      <NavButton aria-label="Назад">
        <ArrowLeft size={19} />
      </NavButton>
      <NavButton aria-label="Вперед">
        <ArrowRight size={19} />
      </NavButton>
      <NavButton aria-label="Обновить">
        <RotateCw size={17} strokeWidth={2.5} />
      </NavButton>
      <Omnibox>
        <Lock size={13} fill="#5f6368" />
        <UrlInput aria-label="Адрес" defaultValue="new.gz-spb.ru/#po/schedule/year/id/38925/type/all" />
        <Star size={15} />
      </Omnibox>
      <Extensions>
        <PersonExt />
        <ShieldExt />
        <Divider />
        <AccountIcon />
        <EllipsisVertical size={18} strokeWidth={2.5} />
      </Extensions>
    </AddressRow>
    <Bookmarks>
      {bookmarks.map(([name, Icon, w]) => (
        <Bookmark key={name} href="#" $w={w}>
          <Icon />
          {name}
        </Bookmark>
      ))}
      <More>»</More>
    </Bookmarks>
  </>
);

const MaxIcon = () => (
  <Svg w={9} h={9}>
    <path d="M0 1.500h9M.5 1v7h8V1" stroke="#444" />
  </Svg>
);

const ScheduleGrid = () => (
  <GridArea>
    <Grid>
      <colgroup>
        {columns.map((w, i) => (
          <col key={i} width={w || undefined} />
        ))}
      </colgroup>
      <thead>
        <tr>
          <Th>
            <FunnelIcon />
          </Th>
          <Th>ИКЗ в ПГ</Th>
          <Th>РН в ПГ</Th>
          <Th>Способ определения</Th>
          <Th $sorted>
            Предмет контракта
            <SortMark />
          </Th>
          <Th $right />
          <Th $right />
          <Th $right />
          <Th $right />
          <Th $right>КТРУ/ККН/ОКПД2</Th>
          <Th $right>Статус</Th>
          <Th $last>Операции</Th>
        </tr>
      </thead>
      <tbody>
        <Row>
          <Td colSpan={9} />
          <Td $right>
            <ScrolledCell>{scrolledCodes}</ScrolledCell>
          </Td>
          <Td colSpan={2} />
        </Row>
        {rows.map((row, i) => (
          <Row key={i}>
            <Td />
            <Td $clip>{ikz}</Td>
            <Td $clip>{rnPrefix + row.rn + "0001"}</Td>
            <Td>
              <AuctionIcon />
            </Td>
            <Td>{row.subject}</Td>
            <Td $right>{row.from}</Td>
            <Td $right>{row.from && "12.2019"}</Td>
            <Td $right>{row.sum}</Td>
            <Td $right>{row.from && "—"}</Td>
            <Td $right>{row.codes}</Td>
            <Td $right>{row.status}</Td>
            <Td $ops>
              <Ops>
                {row.ops.map((op) => {
                  const Icon = opIcons[op];
                  return (
                    <button key={op} aria-label={op}>
                      <Icon />
                    </button>
                  );
                })}
              </Ops>
            </Td>
          </Row>
        ))}
      </tbody>
    </Grid>
    <ScrollColumn>
      <ScrollHead />
      <ArrowButton $up aria-label="Вверх" />
      <Thumb $h={168} $push="auto 1px 0" />
      <ArrowButton $dim aria-label="Вниз" />
    </ScrollColumn>
  </GridArea>
);

const ErrorDialog = () => (
  <Overlay>
    <Dialog>
      <DialogTitle>
        <h2>Подробности ошибки, переданные с ЕИС</h2>
        <ToolButton aria-label="Закрыть">
          <X size={12} />
        </ToolButton>
      </DialogTitle>
      <DialogBody>
        <DialogGrid>
          <table>
            <colgroup>
              <col width="28" />
              <col width="123" />
              <col />
            </colgroup>
            <thead>
              <tr>
                <Th $h={24} />
                <Th $h={24} $sorted>
                  Критичность
                  <SortMark $up />
                </Th>
                <Th $h={24}>Описание</Th>
              </tr>
            </thead>
            <tbody>
              {errors.map(([level, text], i) => (
                <ErrorRow key={i} $selected={i === 0}>
                  <ErrorTd />
                  <ErrorTd>{level}</ErrorTd>
                  <ErrorTd>{text}</ErrorTd>
                </ErrorRow>
              ))}
            </tbody>
          </table>
          <ScrollColumn>
            <ScrollHead $h={24} />
            <ArrowButton $up $dim aria-label="Вверх" />
            <Thumb $h={220} $push="0 1px auto" />
            <ArrowButton aria-label="Вниз" />
          </ScrollColumn>
        </DialogGrid>
      </DialogBody>
    </Dialog>
  </Overlay>
);

const Paging = () => (
  <Pager>
    <PagerGroup $gap={13}>
      <button aria-label="Первая">
        <Svg w={10} h={12}>
          <path d="M0 0h3v12H0zM10 0v12L4 6z" fill="#777" />
        </Svg>
      </button>
      <button aria-label="Предыдущая">
        <Svg w={7} h={12}>
          <path d="M7 0v12L0 6z" fill="#777" />
        </Svg>
      </button>
    </PagerGroup>
    <PagerGroup $gap={0}>
      <label htmlFor="page">Страница</label>
      <PageInput id="page" defaultValue="2" />
      из 3
    </PagerGroup>
    <PagerGroup $gap={12}>
      <button aria-label="Следующая">
        <Svg w={12} h={12}>
          <path d="M4 0v12l6-6z" fill="#777" />
        </Svg>
      </button>
      <button aria-label="Последняя">
        <Svg w={10} h={12}>
          <path d="M7 0h3v12H7zM0 0v12l6-6z" fill="#777" />
        </Svg>
      </button>
    </PagerGroup>
    <PagerGroup $gap={0}>
      <button aria-label="Обновить">
        <Svg>
          <path d="M2 7c0-6 9-7 11-3M14 9c0 6-9 7-11 3" stroke="#888" strokeWidth="2" />
          <path d="M15 1v6H9zM1 15V9h6z" fill="#888" />
        </Svg>
      </button>
    </PagerGroup>
    <PageCount>Позиции 26 - 50 из 65</PageCount>
  </Pager>
);

const App = () => (
  <Screen>
    <GlobalStyle />
    <Browser />
    <Page>
      <Banner>
        <BannerText>
          <p>
            Вниманию Заказчиков!
            <br />
            08.10.2019 подсистема Портал 44 была обновлена. С составом обновления №08102019 можно ознакомиться в
            "Журнале обновлений АИС ГЗ" размещенном на сайте службы технической поддержки по ссылке{" "}
            <a href="#">https://hd.gz-spb.ru/registry_updates</a>. Обновленное руководство пользователя размещено на
            сайте закупок Санкт-Петербурга (быстрый переход через пункт меню "Руководство пользователя")
          </p>
          <p>
            На текущий момент наблюдается ошибка ЕИС при приеме Исполнения контракта, просьба ознакомиться с
            разъяснениями технической поддержки АИС ГЗ <a href="#">https://hd.gz-spb.ru/node/461411</a>
          </p>
        </BannerText>
        <BannerClose aria-label="Закрыть">
          <X size={13} strokeWidth={4} />
        </BannerClose>
      </Banner>
      <SiteHeader>
        <Brand>
          <CityArms />
          <BrandText>
            <Committee>Комитет по государственному заказу Санкт-Петербурга</Committee>
            <SiteName>Государственный заказ</SiteName>
          </BrandText>
        </Brand>
        <UserBox>
          <b>Федорова Анастасия Анатольевна</b>
          <br />
          СПБ ГБУЗ ГКДЦ "ЮВЕНТА"
        </UserBox>
      </SiteHeader>
      <GreyBar>
        <ToolButton aria-label="Развернуть">
          <MaxIcon />
        </ToolButton>
      </GreyBar>
      <MenuBar>
        {menu.map(([name, Icon, hasMenu]) => (
          <MenuButton key={name}>
            <Icon />
            {name}
            {hasMenu && <Caret />}
          </MenuButton>
        ))}
      </MenuBar>
      <Panel>
        <PanelTitle>
          <h1>План-график на 2019 год (Опубликован в ЕИС)</h1>
          <ToolButton aria-label="Развернуть">
            <MaxIcon />
          </ToolButton>
          <ToolButton aria-label="Обновить">
            <Svg w={9} h={9}>
              <path d="M0 5h2V2h4M9 4H7v3H3" stroke="#666" />
              <path d="M5 0l3 2-3 2zM4 5v4L1 7z" fill="#666" />
            </Svg>
          </ToolButton>
        </PanelTitle>
        <PanelTabs>
          <PanelTab $active>Позиции плана-графика</PanelTab>
          <PanelTab>Особые закупки</PanelTab>
          <PanelTab>Детализирующие закупки</PanelTab>
        </PanelTabs>
        <ScheduleGrid />
        <Paging />
      </Panel>
      <StatusBar>09 Окт 11:17</StatusBar>
      <LinkBubble>https://new.gz-spb.ru/#</LinkBubble>
      <ErrorDialog />
    </Page>
    <Taskbar>
      <TaskButton $narrow aria-label="Пуск">
        <WinIcon />
      </TaskButton>
      <TaskButton $narrow aria-label="Поиск">
        <Search size={17} strokeWidth={1.5} transform="scale(-1,1)" />
      </TaskButton>
      <TaskButton aria-label="Представление задач">
        <TaskView />
      </TaskButton>
      <TaskButton $open aria-label="Internet Explorer">
        <IeIcon />
      </TaskButton>
      <TaskButton aria-label="Chrome">
        <ChromeIcon />
      </TaskButton>
      <TaskButton aria-label="Почта">
        <MailApp />
      </TaskButton>
      <TaskButton $open aria-label="Проводник">
        <FolderApp />
      </TaskButton>
      <TaskButton $open aria-label="Excel">
        <OfficeApp color="#1d7044" letter="X" />
      </TaskButton>
      <TaskButton $active aria-label="Chrome">
        <ChromeIcon />
      </TaskButton>
      <TaskButton $open aria-label="Word">
        <OfficeApp color="#2a5699" letter="W" />
      </TaskButton>
      <TaskButton $open aria-label="7-Zip">
        <ZipApp />
      </TaskButton>
      <Tray>
        <PeopleTray />
        <ChevronUp size={16} />
        <UserTray />
        <NetTray />
        <VolTray />
        РУС
        <Clock>
          11:17
          <br />
          09.10.2019
        </Clock>
        <ActionCenter />
        <Divider />
      </Tray>
    </Taskbar>
  </Screen>
);

export default App;
